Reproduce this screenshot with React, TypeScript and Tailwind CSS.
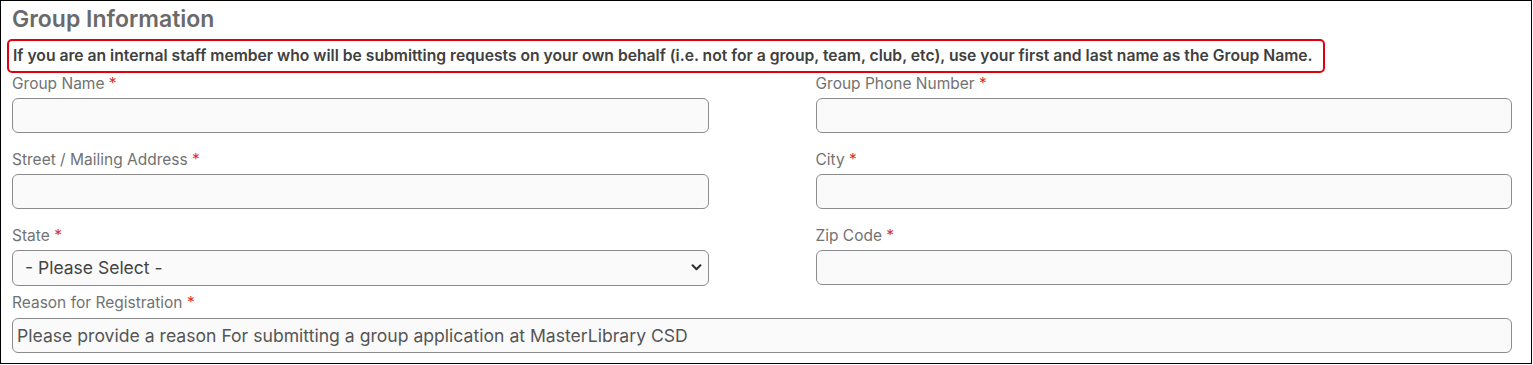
import { ReactNode } from 'react';

const font = { fontFamily: 'Inter, "Noto Sans", sans-serif' };

function Label({ children }: { children: ReactNode }) {
  return (
    <label className="block h-5 text-[15.5px] leading-5 text-[#727272]">
      {children} <span className="text-[#d9342b]">*</span>
    </label>
  );
}

function TextField({ label }: { label: string }) {
  return (
    <div className="flex flex-col gap-1">
      <Label>{label}</Label>
      <input
        type="text"
        className="h-[35px] w-full rounded-md border border-[#8c8c8c] bg-[#fafafa] px-3 text-[16px] outline-none"
      />
    </div>
  );
}

function StateField() {
  return (
    <div className="flex flex-col gap-1">
      <Label>State</Label>
      <div className="relative">
        <select
          defaultValue=""
          className="h-[36px] w-full appearance-none rounded-md border border-[#8c8c8c] bg-[#fafafa] pl-[12px] pr-8 text-[17.5px] text-[#444] outline-none"
        >
          <option value="">- Please Select -</option>
        </select>
        <svg
          viewBox="0 0 12 8"
          className="pointer-events-none absolute right-[7px] top-[14px] h-[7px] w-[11px]"
        >
          <path d="M1.5 1.5 6 6l4.5-4.5" fill="none" stroke="#333" strokeWidth="2.4" strokeLinecap="round" strokeLinejoin="round" />
        </svg>
      </div>
    </div>
  );
}

export default function App() {
  return (
    <div className="bg-white" style={font}>
      <div className="h-[364px] w-[1532px] border border-black pl-[11px] pr-[19px] pt-[4px]">
        <h2 className="h-[28px] text-[23px] font-semibold leading-[28px] text-[#6a6a6a]">Group Information</h2>

        <div className="-ml-[5px] mt-[6px] w-[1318px] rounded-[5px] border-2 border-[#e3000b] py-[5px] pl-[4px]">
          <p className="whitespace-nowrap text-[15.7px] font-semibold leading-5 text-[#404040]">
            If you are an internal staff member who will be submitting requests on your own behalf (i.e. not for a
            group, team, club, etc), use your first and last name as the Group Name.
          </p>
        </div>

        <div className="mt-px grid grid-cols-2 gap-x-[107px] gap-y-[17px]">
          <TextField label="Group Name" />
          <TextField label="Group Phone Number" />
          <TextField label="Street / Mailing Address" />
          <TextField label="City" />
          <StateField />
          <TextField label="Zip Code" />
        </div>

        <div className="mt-[7px] flex flex-col gap-[5px]">
          <Label>Reason for Registration</Label>
          <input
            type="text"
            placeholder="Please provide a reason For submitting a group application at MasterLibrary CSD"
            className="h-[35px] w-full rounded-md border border-[#8c8c8c] bg-[#fafafa] px-[4px] text-[17.6px] text-[#444] outline-none placeholder:text-[#555]"
          />
        </div>
      </div>
    </div>
  );
}
